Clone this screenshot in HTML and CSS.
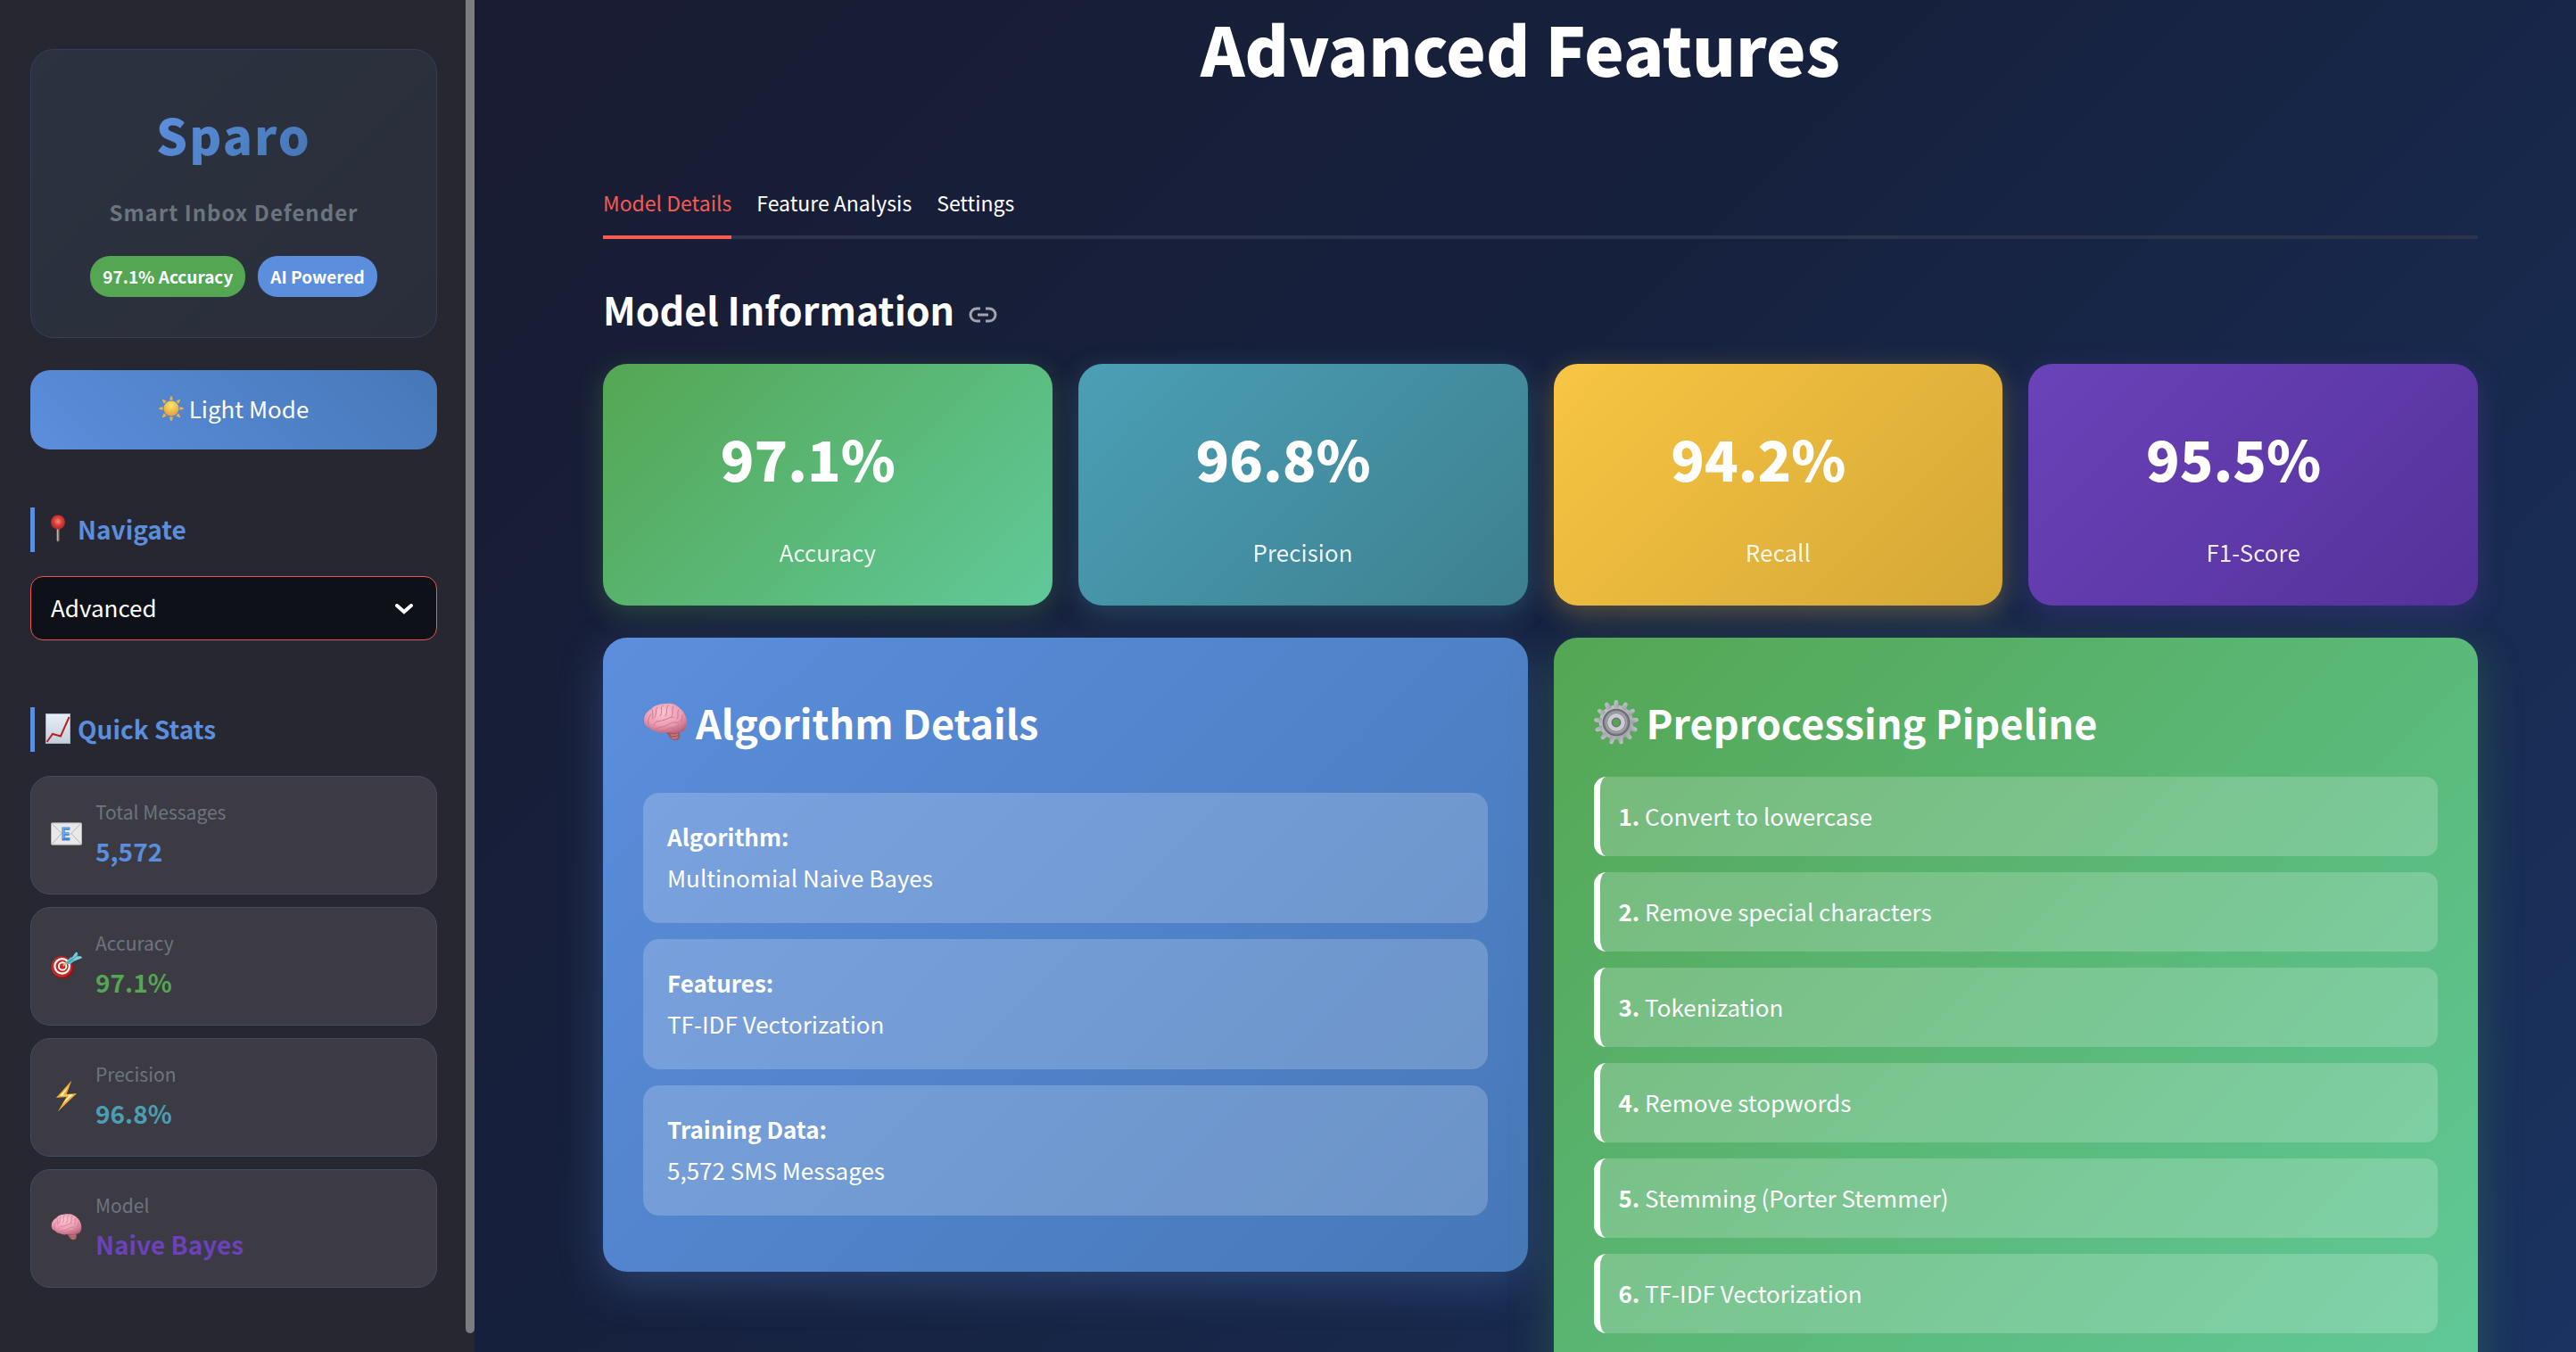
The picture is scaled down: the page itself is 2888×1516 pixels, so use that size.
FILE: index.html
```html
<!DOCTYPE html>
<html lang="en">
<head>
<meta charset="utf-8">
<meta name="viewport" content="width=device-width, initial-scale=1">
<title>Sparo - Advanced Features</title>
<link rel="stylesheet" href="styles.css">
</head>
<body>
<svg class="defs" width="0" height="0" aria-hidden="true">
  <defs>
    <radialGradient id="g-brain" cx="45%" cy="30%" r="75%"><stop offset="0" stop-color="#fbc3d0"/><stop offset=".6" stop-color="#ec9cb2"/><stop offset="1" stop-color="#b8607a"/></radialGradient>
    <radialGradient id="g-sun" cx="50%" cy="30%" r="70%"><stop offset="0" stop-color="#fbe96f"/><stop offset="1" stop-color="#eb9b33"/></radialGradient>
    <radialGradient id="g-pin" cx="50%" cy="45%" r="60%"><stop offset="0" stop-color="#f58a80"/><stop offset=".5" stop-color="#d83c34"/><stop offset="1" stop-color="#a8221f"/></radialGradient>
    <linearGradient id="g-paper" x1="0" y1="0" x2="0" y2="1"><stop offset="0" stop-color="#e6eff8"/><stop offset="1" stop-color="#c4cfda"/></linearGradient>
    <linearGradient id="g-gear" x1="0" y1="0" x2="1" y2="1"><stop offset="0" stop-color="#c9cbd0"/><stop offset="1" stop-color="#9a9ca3"/></linearGradient>
    <symbol id="i-brain" viewBox="0 0 50 44">
      <path d="M24 31c3 2 5 8 8 10 3 2 8 2 9-2 1-3 0-6-2-8z" fill="#a75a60"/>
      <path d="M1 20C1 12 6 9 9 7c4-5 12-6 18-6 6-1 11 2 14 5 5 4 8 10 8 16 0 8-4 11-8 11-5 2-10 0-14 0-4 2-9 1-13-1C8 31 8 28 5 27 2 26 1 23 1 20z" fill="url(#g-brain)"/>
      <g fill="none" stroke="#c9768f" stroke-width="1" stroke-linecap="round">
        <path d="M6 25c-1-4 0-9 3-12M10 8c2 3 0 6 1 10M16 5c-3 3 0 7-3 11M22 3c-4 4 1 7-3 12M28 3c-3 4 0 7-3 12M34 4c-3 4 1 6-2 11M40 8c-3 3 1 6-2 10M45 13c-3 2 0 6-2 9"/>
        <path d="M12 25c1-5 6-4 9-5 5-1 8-4 13-4M13 31c4-5 8-3 12-5 4-1 7-5 11-4 3 1 5-1 6-3M22 32c4 0 5-4 9-4 4 1 8-1 9-4M35 32c2-2 7-1 10-5"/>
      </g>
      <path d="M31 36c3 0 6 1 8-1M32 39c3 1 5 1 7-1" fill="none" stroke="#d99095" stroke-width="1"/>
    </symbol>
    <symbol id="i-gear" viewBox="0 0 48 48">
      <g fill="url(#g-gear)">
        <circle cx="24" cy="24" r="18.500"/>
        <path id="tooth" d="M21 8l1-7q2-2 4 0l1 7z"/>
        <use href="#tooth" transform="rotate(27.700 24 24)"/><use href="#tooth" transform="rotate(55.400 24 24)"/><use href="#tooth" transform="rotate(83.100 24 24)"/><use href="#tooth" transform="rotate(110.800 24 24)"/><use href="#tooth" transform="rotate(138.500 24 24)"/><use href="#tooth" transform="rotate(166.200 24 24)"/><use href="#tooth" transform="rotate(193.800 24 24)"/><use href="#tooth" transform="rotate(221.500 24 24)"/><use href="#tooth" transform="rotate(249.200 24 24)"/><use href="#tooth" transform="rotate(276.900 24 24)"/><use href="#tooth" transform="rotate(304.600 24 24)"/><use href="#tooth" transform="rotate(332.300 24 24)"/>
      </g>
      <circle cx="24" cy="24" r="14" fill="#85878d" stroke="#66686e" stroke-width="1.500"/>
      <circle cx="24" cy="24" r="11" fill="none" stroke="#a2a4aa" stroke-width="1.500"/>
      <circle cx="24" cy="24" r="7" fill="#54a655" stroke="#cbccd1" stroke-width="5"/>
      <circle cx="24" cy="24" r="4.500" fill="none" stroke="#6f7177" stroke-width="1.500"/>
    </symbol>
    <symbol id="i-sun" viewBox="0 0 28 28">
      <g fill="#e9b445">
        <path id="ray" d="M12 4.500L13.500 0h1L16 4.500z"/>
        <use href="#ray" transform="rotate(45 14 14)"/><use href="#ray" transform="rotate(90 14 14)"/><use href="#ray" transform="rotate(135 14 14)"/><use href="#ray" transform="rotate(180 14 14)"/><use href="#ray" transform="rotate(225 14 14)"/><use href="#ray" transform="rotate(270 14 14)"/><use href="#ray" transform="rotate(315 14 14)"/>
      </g>
      <circle cx="14" cy="14" r="8.500" fill="url(#g-sun)"/>
    </symbol>
    <symbol id="i-pin" viewBox="0 0 28 32">
      <path d="M12.500 14h3v15q-1.500 3-3 0z" fill="#8c7d75"/><path d="M13 15h1v14h-1z" fill="#c1b4ab"/>
      <circle cx="14" cy="8.500" r="8" fill="url(#g-pin)"/>
    </symbol>
    <symbol id="i-chart" viewBox="0 0 28 34">
      <rect x=".5" y=".5" width="27" height="33" fill="url(#g-paper)" stroke="#a9b3bd"/>
      <path d="M1.500 32L8 23l9 2.500L26.500 4" fill="none" stroke="#b3241f" stroke-width="2"/>
    </symbol>
    <symbol id="i-mail" viewBox="0 0 36 26">
      <rect x=".5" y=".5" width="35" height="25" rx="1" fill="#e9e9e9" stroke="#b9b9bb"/>
      <path d="M1 1l13 13q4 3 8 0L35 1M1 25l11-12M35 25L24 13" fill="none" stroke="#b3b3b5"/>
      <path d="M22 7h-7.500v12H22M14.500 13H21" fill="none" stroke="#4383d6" stroke-width="3.400"/>
      <path d="M21.500 6h-7v12.500M14.500 12.500H21" fill="none" stroke="#76aef0" stroke-width="1.500"/>
    </symbol>
    <symbol id="i-target" viewBox="0 0 36 32">
      <ellipse cx="14" cy="19.500" rx="12.500" ry="12" fill="#8e1714"/>
      <circle cx="12.500" cy="18" r="12" fill="#c42a25"/>
      <circle cx="13" cy="17.500" r="8.500" fill="none" stroke="#fff" stroke-width="2.300"/>
      <circle cx="13.500" cy="17.500" r="4.300" fill="none" stroke="#fff" stroke-width="2"/>
      <path d="M14 17l6-5" stroke="#e8b53e" stroke-width="2"/>
      <path d="M18 15l-1-2 6-6 4 1 1 3-6 4z" fill="#5fbccb"/>
      <path d="M24 8l5-7 2 1-1 4 5 0 1 2-8 3z" fill="#7bd0db"/>
      <path d="M19 14L32 4" stroke="#3796a8"/>
    </symbol>
    <symbol id="i-bolt" viewBox="0 0 36 36">
      <path d="M24 0L6 20l12-1L8 36l22-21-12 1z" fill="#f3ab33"/>
      <path d="M21 6L10 18l11-1-8 11 13-12-12 1z" fill="#fff3c0"/>
    </symbol>
  </defs>
</svg>
<div class="app">
  <aside class="sidebar">
    <div class="sidebar-scroll">
      <section class="brand">
        <h2 class="brand-name">Sparo</h2>
        <p class="brand-tagline">Smart Inbox Defender</p>
        <div class="badges"><span class="badge badge-green">97.1% Accuracy</span><span class="badge badge-blue">AI Powered</span></div>
      </section>
      <button class="theme-button" type="button"><svg class="icon-sun" aria-hidden="true"><use href="#i-sun"/></svg>Light Mode</button>
      <h3 class="side-heading"><svg class="icon-side" aria-hidden="true"><use href="#i-pin"/></svg><label for="page">Navigate</label></h3>
      <div class="select-wrap">
        <select id="page" class="page-select"><option>Advanced</option></select>
        <svg class="chevron" viewBox="0 0 20 12" aria-hidden="true"><path d="M2 2l8 7 8-7"/></svg>
      </div>
      <h3 class="side-heading side-heading-stats"><svg class="icon-side" aria-hidden="true"><use href="#i-chart"/></svg>Quick Stats</h3>
      <div class="stats">
        <div class="stat"><svg class="stat-icon" aria-hidden="true"><use href="#i-mail"/></svg><div><p class="stat-label">Total Messages</p><p class="stat-value text-blue">5,572</p></div></div>
        <div class="stat"><svg class="stat-icon" aria-hidden="true"><use href="#i-target"/></svg><div><p class="stat-label">Accuracy</p><p class="stat-value text-green">97.1%</p></div></div>
        <div class="stat"><svg class="stat-icon" aria-hidden="true"><use href="#i-bolt"/></svg><div><p class="stat-label">Precision</p><p class="stat-value text-teal">96.8%</p></div></div>
        <div class="stat"><svg class="stat-icon" aria-hidden="true"><use href="#i-brain"/></svg><div><p class="stat-label">Model</p><p class="stat-value text-purple">Naive Bayes</p></div></div>
      </div>
    </div>
    <span class="scroll-thumb" aria-hidden="true"></span>
  </aside>
  <main class="main">
    <h1 class="page-title">Advanced Features</h1>
    <div class="tabs" role="tablist">
      <button class="tab tab-active" type="button" role="tab" aria-selected="true">Model Details</button>
      <button class="tab" type="button" role="tab" aria-selected="false">Feature Analysis</button>
      <button class="tab" type="button" role="tab" aria-selected="false">Settings</button>
    </div>
    <h2 class="section-title" id="model-information">Model Information
      <a class="anchor" href="#model-information" aria-label="Link to Model Information"><svg viewBox="0 0 32 18" aria-hidden="true"><path d="M13 2H9a7 7 0 0 0 0 14h4M19 2h4a7 7 0 0 1 0 14h-4M10 9h12"/></svg></a>
    </h2>
    <div class="metrics">
      <article class="metric metric-green"><h3>97.1%</h3><p>Accuracy</p></article>
      <article class="metric metric-teal"><h3>96.8%</h3><p>Precision</p></article>
      <article class="metric metric-yellow"><h3>94.2%</h3><p>Recall</p></article>
      <article class="metric metric-purple"><h3>95.5%</h3><p>F1-Score</p></article>
    </div>
    <div class="panels">
      <section class="panel panel-blue">
        <h3 class="panel-title"><svg class="panel-icon" aria-hidden="true"><use href="#i-brain"/></svg>Algorithm Details</h3>
        <dl class="details">
          <div class="detail"><dt>Algorithm:</dt><dd>Multinomial Naive Bayes</dd></div>
          <div class="detail"><dt>Features:</dt><dd>TF-IDF Vectorization</dd></div>
          <div class="detail"><dt>Training Data:</dt><dd>5,572 SMS Messages</dd></div>
        </dl>
      </section>
      <section class="panel panel-green">
        <h3 class="panel-title"><svg class="panel-icon" aria-hidden="true"><use href="#i-gear"/></svg>Preprocessing Pipeline</h3>
        <div class="steps">
          <p class="step"><strong>1.</strong> Convert to lowercase</p>
          <p class="step"><strong>2.</strong> Remove special characters</p>
          <p class="step"><strong>3.</strong> Tokenization</p>
          <p class="step"><strong>4.</strong> Remove stopwords</p>
          <p class="step"><strong>5.</strong> Stemming (Porter Stemmer)</p>
          <p class="step"><strong>6.</strong> TF-IDF Vectorization</p>
        </div>
      </section>
    </div>
  </main>
</div>
</body>
</html>
```
FILE: styles.css
```css
* { box-sizing: border-box; margin: 0; padding: 0; }
body {
  font-family: "Noto Sans CJK JP", "Noto Sans", sans-serif;
  font-size: 26px;
  line-height: 46px;
  color: #fff;
}
button, select { font: inherit; color: inherit; }
.defs { position: absolute; }

.app {
  display: flex;
  height: 100vh;
  background: linear-gradient(135deg, #1a1a2e 0%, #16213e 50%, #1a3360 100%);
}

/* Sidebar */
.sidebar { position: relative; flex: 0 0 532px; background: #262730; }
.sidebar-scroll {
  height: 100%;
  overflow-y: auto;
  scrollbar-width: none;
  padding: 55px 42px 71px 34px;
}
.scroll-thumb {
  position: absolute;
  top: 0;
  right: 0;
  bottom: 21px;
  width: 10px;
  border-radius: 0 0 5px 5px;
  background: #7d7d80;
}
.brand {
  padding: 53px 20px 45px;
  border: 1px solid #31415c;
  border-radius: 26px;
  background: linear-gradient(135deg, #2c323f, #2a2e3b);
  text-align: center;
}
.brand-name {
  font-size: 55px;
  line-height: 82px;
  font-weight: 900;
  letter-spacing: 2px;
  color: transparent;
  background: linear-gradient(135deg, #5b8edc 30%, #4678b8 70%);
  background-clip: text;
}
.brand-tagline {
  margin-top: 27px;
  font-size: 24px;
  line-height: 40px;
  font-weight: 700;
  letter-spacing: 1px;
  color: #6c757d;
}
.badges { display: flex; justify-content: center; gap: 14px; margin-top: 29px; }
.badge {
  padding: 0 14px;
  border-radius: 22px;
  font-size: 19px;
  line-height: 46px;
  font-weight: 700;
  white-space: nowrap;
}
.badge-green { background: #54a653; }
.badge-blue { background: #5b8edc; }
.theme-button {
  display: flex;
  align-items: center;
  justify-content: center;
  gap: 6px;
  width: 100%;
  height: 89px;
  margin-top: 36px;
  padding-bottom: 3px;
  border: 0;
  border-radius: 22px;
  background: linear-gradient(45deg, #5b8edc, #4678b8);
}
.icon-sun { width: 28px; height: 28px; }
.side-heading {
  display: flex;
  align-items: center;
  gap: 8px;
  margin: 65px 0 27px;
  padding: 0 0 2px 12px;
  border-left: 5px solid #5b8edc;
  font-size: 28px;
  line-height: 48px;
  color: #5b8edc;
}
.side-heading-stats { margin-top: 75px; }
.icon-side { width: 28px; height: 34px; }
.select-wrap { position: relative; }
.page-select {
  display: block;
  width: 100%;
  height: 72px;
  padding: 0 22px 2px;
  border: 1px solid #f0554f;
  border-radius: 14px;
  background: #0e1117;
  appearance: none;
}
.chevron {
  position: absolute;
  top: 31px;
  right: 27px;
  width: 20px;
  height: 12px;
  fill: none;
  stroke: #fff;
  stroke-width: 4px;
  stroke-linecap: round;
  pointer-events: none;
}
.stats { display: grid; gap: 14px; }
.stat {
  display: flex;
  align-items: center;
  gap: 15px;
  padding: 20px 22px 23px;
  border: 1px solid #414b61;
  border-radius: 22px;
  background: #3c3b44;
}
.stat-icon { width: 35px; height: 36px; }
.stat-label { font-size: 21px; line-height: 38px; color: #6c757d; }
.stat-value { font-size: 28px; line-height: 50px; font-weight: 700; }
.text-blue { color: #5b8edc; }
.text-green { color: #54a653; }
.text-teal { color: #4b9fb5; }
.text-purple { color: #6b42b9; }

/* Main */
.main {
  flex: 1;
  min-width: 0;
  overflow-y: auto;
  scrollbar-width: none;
  padding: 0 110px 120px 144px;
}
.page-title {
  padding-right: 45px;
  font-size: 75px;
  line-height: 108px;
  font-weight: 900;
  text-align: center;
}
.tabs {
  display: flex;
  gap: 28px;
  margin-top: 80px;
  box-shadow: inset 0 -4px #2d334b;
}
.tab {
  height: 80px;
  padding-top: 2px;
  border: 0;
  border-bottom: 4px solid transparent;
  background: none;
  font-size: 23px;
}
.tab-active { color: #f65b54; border-bottom-color: #f65b54; }
.section-title {
  display: flex;
  align-items: center;
  gap: 16px;
  margin: 48px 0 32px;
  font-size: 43px;
  line-height: 60px;
}
.anchor { display: flex; padding-top: 14px; }
.anchor svg { width: 32px; height: 18px; fill: none; stroke: #a3a4ac; stroke-width: 3px; }
.metrics { display: grid; grid-template-columns: repeat(4, 1fr); gap: 29px; }
.metric {
  padding: 55px 45px 37px;
  border-radius: 27px;
  text-align: center;
}
.metric h3 { padding-right: 44px; font-size: 62px; line-height: 100px; font-weight: 900; }
.metric p { margin-top: 33px; opacity: .9; }
.metric-green { background: linear-gradient(135deg, #54a653, #60c999); box-shadow: 0 8px 30px rgba(84, 166, 83, .3); }
.metric-teal { background: linear-gradient(135deg, #4b9fb5, #3d8090); box-shadow: 0 8px 30px rgba(75, 159, 181, .3); }
.metric-yellow { background: linear-gradient(135deg, #f8c543, #d4a836); box-shadow: 0 8px 30px rgba(248, 197, 67, .3); }
.metric-purple { background: linear-gradient(135deg, #6b42b9, #54329a); box-shadow: 0 8px 30px rgba(107, 66, 185, .3); }
.panels {
  display: grid;
  grid-template-columns: repeat(2, 1fr);
  align-items: start;
  gap: 29px;
  margin-top: 36px;
}
.panel { padding: 65px 45px 63px; border-radius: 27px; }
.panel-blue { background: linear-gradient(135deg, #5b8edc, #4678b8); box-shadow: 0 14px 50px rgba(91, 142, 220, .3); }
.panel-green { background: linear-gradient(135deg, #54a653, #60c999); box-shadow: 0 14px 50px rgba(84, 166, 83, .3); }
.panel-title { display: flex; align-items: center; gap: 9px; font-size: 45px; line-height: 60px; }
.panel-icon { width: 50px; height: 50px; }
.details { display: grid; gap: 18px; margin-top: 49px; }
.detail { padding: 26px 27px 28px; border-radius: 18px; background: rgba(255, 255, 255, .2); }
.detail dt { font-weight: 700; }
.steps { display: grid; gap: 18px; margin-top: 31px; }
.step {
  padding: 21px 21px 22px;
  border-left: 7px solid #fff;
  border-radius: 14px;
  background: rgba(255, 255, 255, .2);
}
```
